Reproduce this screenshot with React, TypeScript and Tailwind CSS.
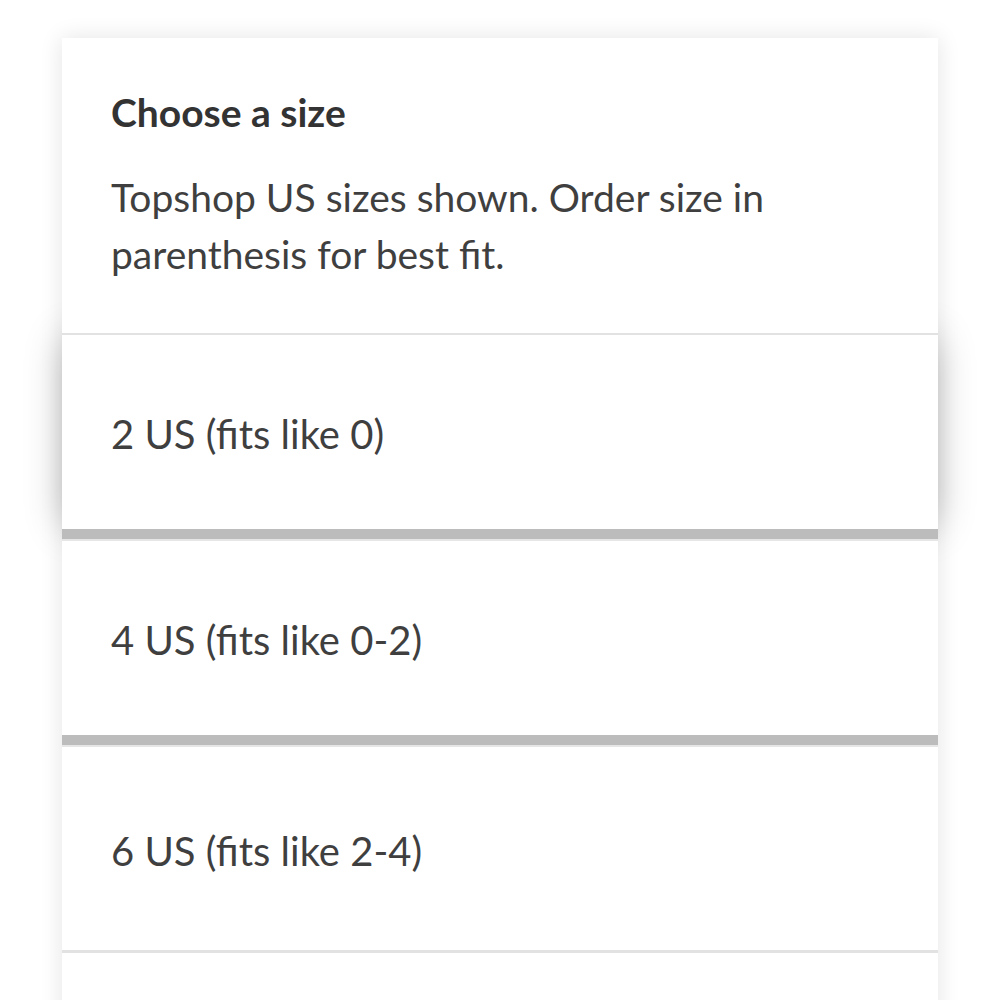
const sizes = [
  { label: "2 US (fits like 0)", active: true },
  { label: "4 US (fits like 0-2)" },
  { label: "6 US (fits like 2-4)" },
  { label: "8 US (fits like 4-6)" },
];

function SizeRow({
  label,
  active,
  height,
}: {
  label: string;
  active?: boolean;
  height: string;
}) {
  return (
    <div
      className={
        "relative flex items-center pt-[4px] px-[49px] bg-white text-[40px] text-[#3f3f3f] " +
        height +
        (active ? " z-10 shadow-[0_0_38px_-4px_rgba(0,0,0,0.3)]" : " z-20")
      }
    >
      {label}
    </div>
  );
}

export default function App() {
  return (
    <div
      className="h-[1000px] overflow-hidden bg-white pt-[38px] px-[62px]"
      style={{ fontFamily: "Lato, 'Open Sans', sans-serif" }}
    >
      <div className="bg-white shadow-[0_0_22px_rgba(0,0,0,0.11)]">
        <div className="relative z-20 bg-white px-[49px] pt-[54px] pb-[50px]">
          <h2 className="text-[39px] font-bold leading-[40px] text-[#333]">
            Choose a size
          </h2>
          <p className="mt-[37px] text-[39px] leading-[57px] text-[#3f3f3f]">
            Topshop US sizes shown. Order size in parenthesis for best fit.
          </p>
        </div>
        <div className="relative z-20 h-[2px] bg-[#e2e2e2]" />
        <SizeRow {...sizes[0]} height="h-[194px]" />
        <div className="relative z-20 h-[12px] bg-[#bcbcbc] border-b-2 border-[#e6e6e6]" />
        <SizeRow {...sizes[1]} height="h-[194px]" />
        <div className="relative z-20 h-[12px] bg-[#bcbcbc] border-b-2 border-[#e6e6e6]" />
        <SizeRow {...sizes[2]} height="h-[203px]" />
        <div className="relative z-20 h-[3px] bg-[#e2e2e2]" />
        <SizeRow {...sizes[3]} height="h-[194px]" />
      </div>
    </div>
  );
}
